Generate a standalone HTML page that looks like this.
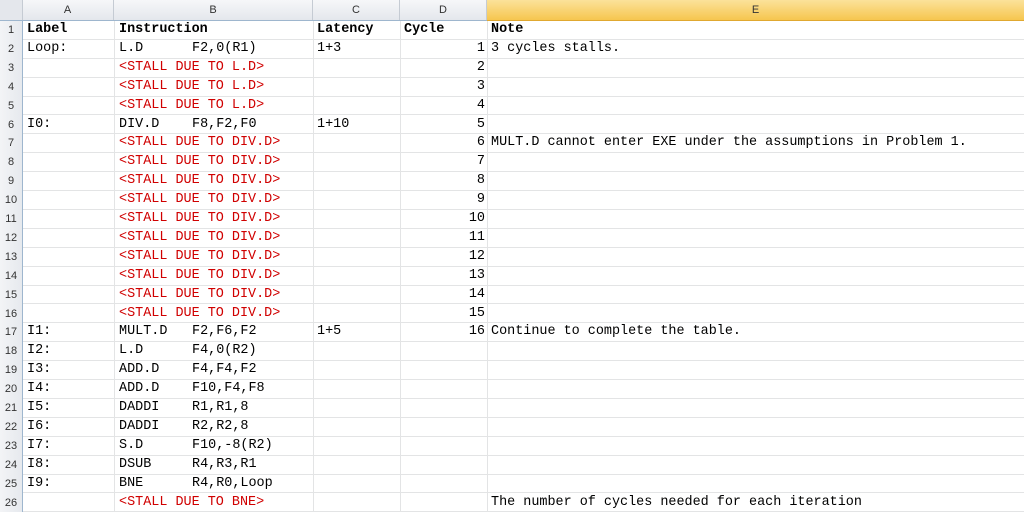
<!DOCTYPE html><html><head><style>
body{margin:0;width:1024px;height:511px;overflow:hidden;background:#fff;font-family:"Liberation Mono",monospace;font-size:13.45px;color:#000}
.hdr{position:absolute;top:0;left:0;width:1024px;height:20px;background:linear-gradient(#f6f7f9,#e4e7ec);border-bottom:1px solid #9eb6ce;font-family:"Liberation Sans",sans-serif;font-size:11px;color:#333}
.hdr div{position:absolute;top:0;height:20px;line-height:20px;text-align:center;border-right:1px solid #c5cbd3}
.rn{position:absolute;left:0;width:22px;background:linear-gradient(90deg,#f3f4f6,#e6e9ee);border-right:1px solid #9eb6ce;font-family:"Liberation Sans",sans-serif;font-size:11px;color:#333;text-align:center}
.row{position:absolute;left:0;width:1024px;height:18.9px;line-height:18.9px}
.row .g{position:absolute;left:22px;right:0;bottom:0;border-bottom:1px solid #e3e4e5}
.c{position:absolute;top:0;white-space:pre}
.v{position:absolute;top:0;height:100%;border-left:1px solid #e3e4e5}
.r{color:#d00000}
b{font-weight:bold}
</style></head><body>
<div class="hdr">
<div style="left:0;width:22px;background:#e4e7ec"></div>
<div style="left:22px;width:91px">A</div>
<div style="left:114px;width:198px">B</div>
<div style="left:313px;width:86px">C</div>
<div style="left:400px;width:86px">D</div>
<div style="left:487px;width:537px;background:linear-gradient(#fbe29a,#f6c64f);border-bottom:1px solid #e0a830">E</div>
</div>
<div id="g" style="position:absolute;top:21px;left:0;width:1024px;height:490px">
<div class="v" style="left:114px"></div><div class="v" style="left:313px"></div><div class="v" style="left:400px"></div><div class="v" style="left:487px"></div>
</div>
<div style="position:absolute;top:21px;left:0;width:1024px">
<div class="row" style="top:0"><div class="g"></div><div class="rn">1</div><b class="c" style="left:27px">Label</b><b class="c" style="left:119px">Instruction</b><b class="c" style="left:317px">Latency</b><b class="c" style="left:404px">Cycle</b><b class="c" style="left:491px">Note</b></div>
<div class="row" style="top:18.9px"><div class="g"></div><div class="rn">2</div><span class="c" style="left:27px">Loop:</span><span class="c" style="left:119px">L.D</span><span class="c" style="left:192px">F2,0(R1)</span><span class="c" style="left:317px">1+3</span><span class="c" style="right:539px">1</span><span class="c" style="left:491px">3 cycles stalls.</span></div>
<div class="row" style="top:37.8px"><div class="g"></div><div class="rn">3</div><span class="c r" style="left:119px">&lt;STALL DUE TO L.D&gt;</span><span class="c" style="right:539px">2</span></div>
<div class="row" style="top:56.7px"><div class="g"></div><div class="rn">4</div><span class="c r" style="left:119px">&lt;STALL DUE TO L.D&gt;</span><span class="c" style="right:539px">3</span></div>
<div class="row" style="top:75.6px"><div class="g"></div><div class="rn">5</div><span class="c r" style="left:119px">&lt;STALL DUE TO L.D&gt;</span><span class="c" style="right:539px">4</span></div>
<div class="row" style="top:94.5px"><div class="g"></div><div class="rn">6</div><span class="c" style="left:27px">I0:</span><span class="c" style="left:119px">DIV.D</span><span class="c" style="left:192px">F8,F2,F0</span><span class="c" style="left:317px">1+10</span><span class="c" style="right:539px">5</span></div>
<div class="row" style="top:113.4px"><div class="g"></div><div class="rn">7</div><span class="c r" style="left:119px">&lt;STALL DUE TO DIV.D&gt;</span><span class="c" style="right:539px">6</span><span class="c" style="left:491px">MULT.D cannot enter EXE under the assumptions in Problem 1.</span></div>
<div class="row" style="top:132.3px"><div class="g"></div><div class="rn">8</div><span class="c r" style="left:119px">&lt;STALL DUE TO DIV.D&gt;</span><span class="c" style="right:539px">7</span></div>
<div class="row" style="top:151.2px"><div class="g"></div><div class="rn">9</div><span class="c r" style="left:119px">&lt;STALL DUE TO DIV.D&gt;</span><span class="c" style="right:539px">8</span></div>
<div class="row" style="top:170.1px"><div class="g"></div><div class="rn">10</div><span class="c r" style="left:119px">&lt;STALL DUE TO DIV.D&gt;</span><span class="c" style="right:539px">9</span></div>
<div class="row" style="top:189px"><div class="g"></div><div class="rn">11</div><span class="c r" style="left:119px">&lt;STALL DUE TO DIV.D&gt;</span><span class="c" style="right:539px">10</span></div>
<div class="row" style="top:207.9px"><div class="g"></div><div class="rn">12</div><span class="c r" style="left:119px">&lt;STALL DUE TO DIV.D&gt;</span><span class="c" style="right:539px">11</span></div>
<div class="row" style="top:226.8px"><div class="g"></div><div class="rn">13</div><span class="c r" style="left:119px">&lt;STALL DUE TO DIV.D&gt;</span><span class="c" style="right:539px">12</span></div>
<div class="row" style="top:245.7px"><div class="g"></div><div class="rn">14</div><span class="c r" style="left:119px">&lt;STALL DUE TO DIV.D&gt;</span><span class="c" style="right:539px">13</span></div>
<div class="row" style="top:264.6px"><div class="g"></div><div class="rn">15</div><span class="c r" style="left:119px">&lt;STALL DUE TO DIV.D&gt;</span><span class="c" style="right:539px">14</span></div>
<div class="row" style="top:283.5px"><div class="g"></div><div class="rn">16</div><span class="c r" style="left:119px">&lt;STALL DUE TO DIV.D&gt;</span><span class="c" style="right:539px">15</span></div>
<div class="row" style="top:302.4px"><div class="g"></div><div class="rn">17</div><span class="c" style="left:27px">I1:</span><span class="c" style="left:119px">MULT.D</span><span class="c" style="left:192px">F2,F6,F2</span><span class="c" style="left:317px">1+5</span><span class="c" style="right:539px">16</span><span class="c" style="left:491px">Continue to complete the table.</span></div>
<div class="row" style="top:321.3px"><div class="g"></div><div class="rn">18</div><span class="c" style="left:27px">I2:</span><span class="c" style="left:119px">L.D</span><span class="c" style="left:192px">F4,0(R2)</span></div>
<div class="row" style="top:340.2px"><div class="g"></div><div class="rn">19</div><span class="c" style="left:27px">I3:</span><span class="c" style="left:119px">ADD.D</span><span class="c" style="left:192px">F4,F4,F2</span></div>
<div class="row" style="top:359.1px"><div class="g"></div><div class="rn">20</div><span class="c" style="left:27px">I4:</span><span class="c" style="left:119px">ADD.D</span><span class="c" style="left:192px">F10,F4,F8</span></div>
<div class="row" style="top:378px"><div class="g"></div><div class="rn">21</div><span class="c" style="left:27px">I5:</span><span class="c" style="left:119px">DADDI</span><span class="c" style="left:192px">R1,R1,8</span></div>
<div class="row" style="top:396.9px"><div class="g"></div><div class="rn">22</div><span class="c" style="left:27px">I6:</span><span class="c" style="left:119px">DADDI</span><span class="c" style="left:192px">R2,R2,8</span></div>
<div class="row" style="top:415.8px"><div class="g"></div><div class="rn">23</div><span class="c" style="left:27px">I7:</span><span class="c" style="left:119px">S.D</span><span class="c" style="left:192px">F10,-8(R2)</span></div>
<div class="row" style="top:434.7px"><div class="g"></div><div class="rn">24</div><span class="c" style="left:27px">I8:</span><span class="c" style="left:119px">DSUB</span><span class="c" style="left:192px">R4,R3,R1</span></div>
<div class="row" style="top:453.6px"><div class="g"></div><div class="rn">25</div><span class="c" style="left:27px">I9:</span><span class="c" style="left:119px">BNE</span><span class="c" style="left:192px">R4,R0,Loop</span></div>
<div class="row" style="top:472.5px"><div class="g"></div><div class="rn">26</div><span class="c r" style="left:119px">&lt;STALL DUE TO BNE&gt;</span><span class="c" style="left:491px">The number of cycles needed for each iteration</span></div>
</div>
</body></html>
